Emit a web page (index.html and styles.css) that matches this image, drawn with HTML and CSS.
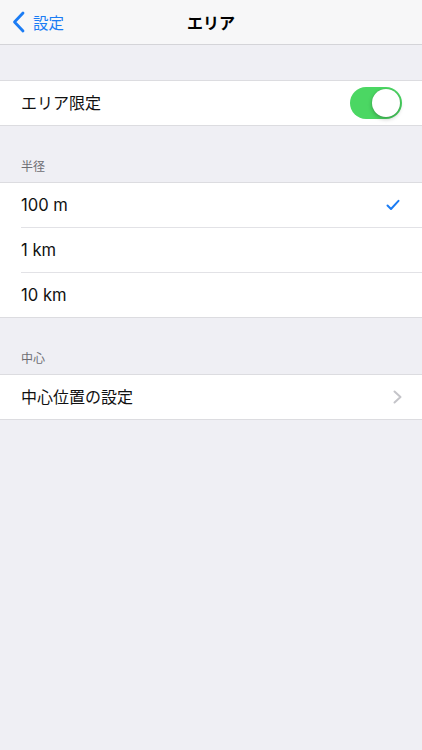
FILE: index.html
```html
<!DOCTYPE html>
<html lang="ja">
<head>
<meta charset="utf-8">
<title>エリア</title>
<link rel="stylesheet" href="styles.css">
</head>
<body>
<header class="nav">
  <a class="back">
    <svg class="back-chevron" width="13" height="22" viewBox="0 0 13 22"><path d="M11 2 L2.5 11 L11 20" fill="none" stroke="#1b7cf4" stroke-width="2.8" stroke-linecap="round" stroke-linejoin="round"/></svg>
    <span class="back-label">設定</span>
  </a>
  <h1 class="title">エリア</h1>
</header>

<div class="spacer"></div>
<ul class="group">
  <li class="row">
    <span class="label">エリア限定</span>
    <span class="switch"><span class="knob"></span></span>
  </li>
</ul>

<div class="section-header">半径</div>
<ul class="group">
  <li class="row">
    <span class="label latin">100 m</span>
    <svg class="check" width="14" height="12" viewBox="0 0 14 12"><path d="M1.5 6.5 L5 10 L12.5 1.8" fill="none" stroke="#1b7cf4" stroke-width="2" stroke-linecap="round" stroke-linejoin="round"/></svg>
  </li>
  <li class="row"><span class="label latin">1 km</span></li>
  <li class="row"><span class="label latin">10 km</span></li>
</ul>

<div class="section-header">中心</div>
<ul class="group">
  <li class="row">
    <span class="label">中心位置の設定</span>
    <svg class="chevron" width="9" height="14" viewBox="0 0 9 14"><path d="M1.5 1.5 L7.5 7 L1.5 12.5" fill="none" stroke="#c4c4c9" stroke-width="2" stroke-linecap="round" stroke-linejoin="round"/></svg>
  </li>
</ul>
</body>
</html>
```
FILE: styles.css
```css
html, body {
  margin: 0;
  padding: 0;
  background: #efeff4;
  font-family: Inter, "Noto Sans CJK JP", sans-serif;
  color: #000;
}
.nav {
  height: 44px;
  background: #f7f7f8;
  border-bottom: 1px solid #d4d4d8;
  display: flex;
  align-items: center;
  justify-content: center;
  position: relative;
}
.back {
  position: absolute;
  left: 12px;
  top: 0;
  height: 44px;
  display: flex;
  align-items: center;
  gap: 8px;
  color: #1b7cf4;
}
.back-chevron { display: block; }
.back-label {
  font-size: 15.5px;
  font-family: "Noto Sans CJK JP", sans-serif;
  line-height: 20px;
}
.title {
  margin: 0;
  font-size: 16px;
  font-weight: 700;
  font-family: "Noto Sans CJK JP", sans-serif;
  line-height: 20px;
}
.spacer { height: 35px; }
.group {
  list-style: none;
  margin: 0;
  padding: 0;
  background: #fff;
  border-top: 1px solid #dcdce0;
  border-bottom: 1px solid #dcdce0;
}
.row {
  height: 44px;
  display: flex;
  align-items: center;
  justify-content: space-between;
  padding: 0 20px 0 21px;
  position: relative;
}
.row + .row {
  border-top: 1px solid transparent;
}
.row + .row::before {
  content: "";
  position: absolute;
  left: 21px;
  right: 0;
  top: -1px;
  border-top: 1px solid #e2e2e6;
}
.label {
  font-size: 16px;
  line-height: 20px;
  color: #111;
}
.latin {
  font-size: 16.6px;
}
.section-header {
  height: 56px;
  box-sizing: border-box;
  padding: 0 21px 8px;
  display: flex;
  align-items: flex-end;
  font-size: 12px;
  color: #6d6d72;
  font-family: "Noto Sans CJK JP", sans-serif;
}
.switch {
  width: 52px;
  height: 32px;
  border-radius: 16px;
  background: #4bd763;
  position: relative;
}
.knob {
  position: absolute;
  right: 2px;
  top: 2px;
  width: 28px;
  height: 28px;
  border-radius: 50%;
  background: #fff;
  box-shadow: 0 2px 4px rgba(0,0,0,0.25), 0 0 1px rgba(0,0,0,0.2);
}
.check { margin-right: 2px; }
```
